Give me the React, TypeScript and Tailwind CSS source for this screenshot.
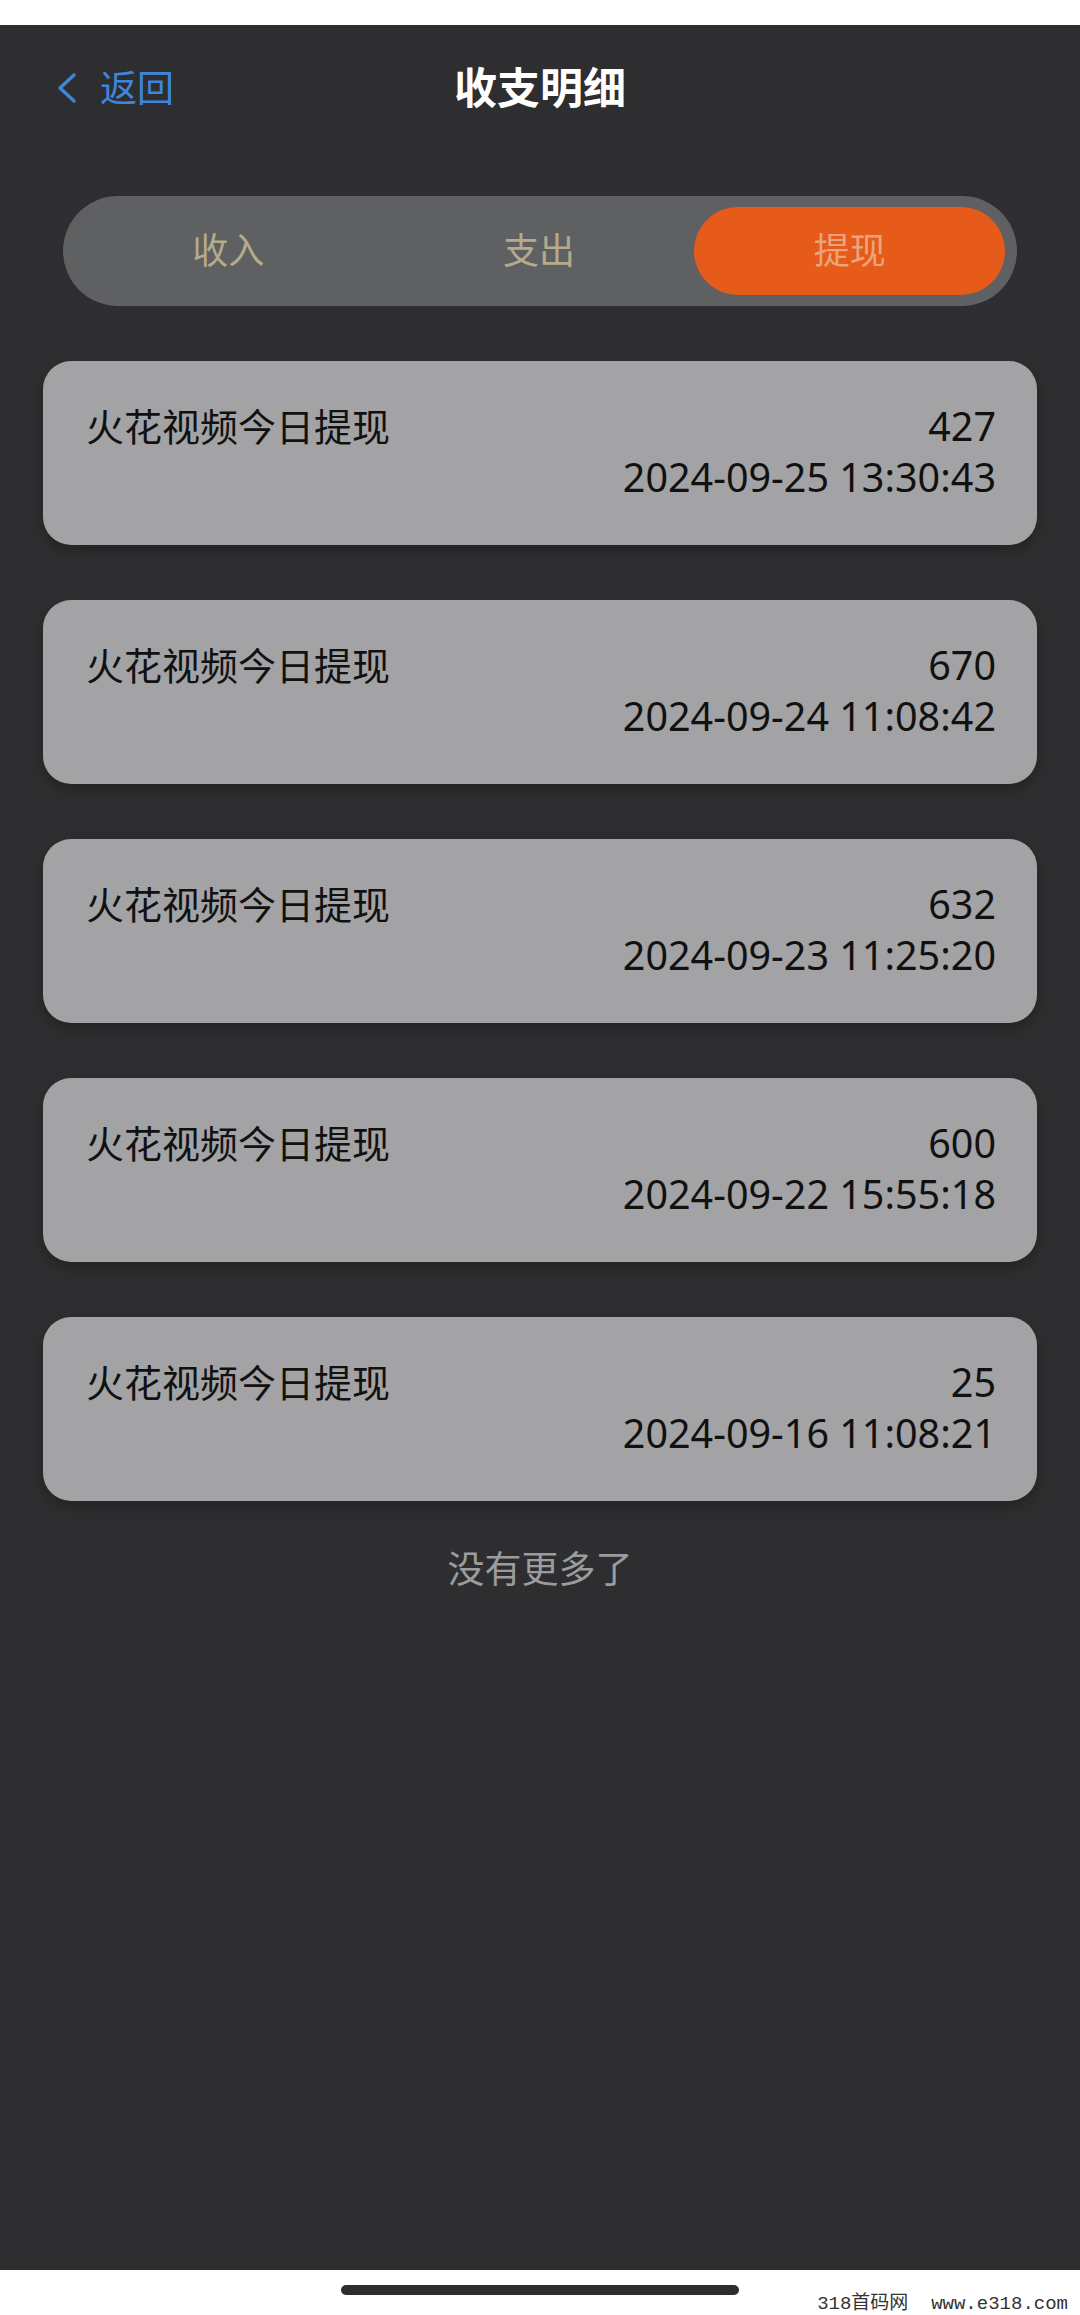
import React from "react";

const records = [
  { amount: "427", time: "2024-09-25 13:30:43" },
  { amount: "670", time: "2024-09-24 11:08:42" },
  { amount: "632", time: "2024-09-23 11:25:20" },
  { amount: "600", time: "2024-09-22 15:55:18" },
  { amount: "25", time: "2024-09-16 11:08:21" },
];

const font = { fontFamily: '"Noto Sans", "Noto Sans CJK SC", sans-serif' };

export default function App() {
  return (
    <div
      className="flex h-[2315px] w-[1080px] flex-col overflow-hidden bg-white"
      style={font}
    >
      <div className="h-[25px] bg-white" />
      <div className="flex flex-1 flex-col bg-[#2e2e30]">
        {/* header */}
        <div className="grid h-[126px] grid-cols-[1fr_auto_1fr] items-center">
          <div className="flex items-center pl-[57px]">
            <svg width="20" height="30" viewBox="0 0 20 30" fill="none">
              <polyline
                points="17,2 3,15 17,28"
                stroke="#3d86da"
                strokeWidth="3.4"
                strokeLinecap="round"
                strokeLinejoin="round"
              />
            </svg>
            <span className="ml-[23px] text-[37px] leading-[44px] text-[#3d86da]">
              返回
            </span>
          </div>
          <div className="text-[43px] font-bold leading-[50px] text-white">
            收支明细
          </div>
          <div />
        </div>

        {/* tabs */}
        <div className="mx-[63px] mt-[45px] grid h-[110px] grid-cols-3 rounded-full bg-[#5f6062] py-[11px] pl-[10px] pr-[12px]">
          <div className="flex items-center justify-center text-[36px] text-[#b4aa8c]">
            收入
          </div>
          <div className="flex items-center justify-center text-[36px] text-[#b4aa8c]">
            支出
          </div>
          <div className="flex items-center justify-center rounded-full bg-[#e65b19] text-[36px] text-[#eba37c]">
            提现
          </div>
        </div>

        {/* list */}
        <div className="mx-[43px] mt-[55px] flex flex-col gap-[55px]">
          {records.map((r, i) => (
            <div
              key={i}
              className="flex h-[184px] justify-between rounded-[28px] bg-[#a3a3a5] pl-[43px] pr-[41px] pt-[40px] text-[38px] leading-[51px] text-[#111111] shadow-[0_6px_14px_rgba(0,0,0,0.25)]"
            >
              <div>火花视频今日提现</div>
              <div className="flex flex-col items-end text-[39.5px]">
                <div>{r.amount}</div>
                <div>{r.time}</div>
              </div>
            </div>
          ))}
        </div>

        <div className="mt-[44px] text-center text-[37px] leading-[48px] text-[#9c9c9e]">
          没有更多了
        </div>
      </div>

      {/* bottom bar */}
      <div className="relative h-[45px] bg-white">
        <div className="mx-auto mt-[15px] h-[10px] w-[398px] rounded-full bg-[#2e2e30]" />
        <div
          className="absolute bottom-[1px] right-[12px] whitespace-pre text-[19px] leading-[19px] text-[#333333]"
          style={{ fontFamily: '"Liberation Mono", "Noto Sans CJK SC", monospace' }}
        >
          318首码网  www.e318.com
        </div>
      </div>
    </div>
  );
}
